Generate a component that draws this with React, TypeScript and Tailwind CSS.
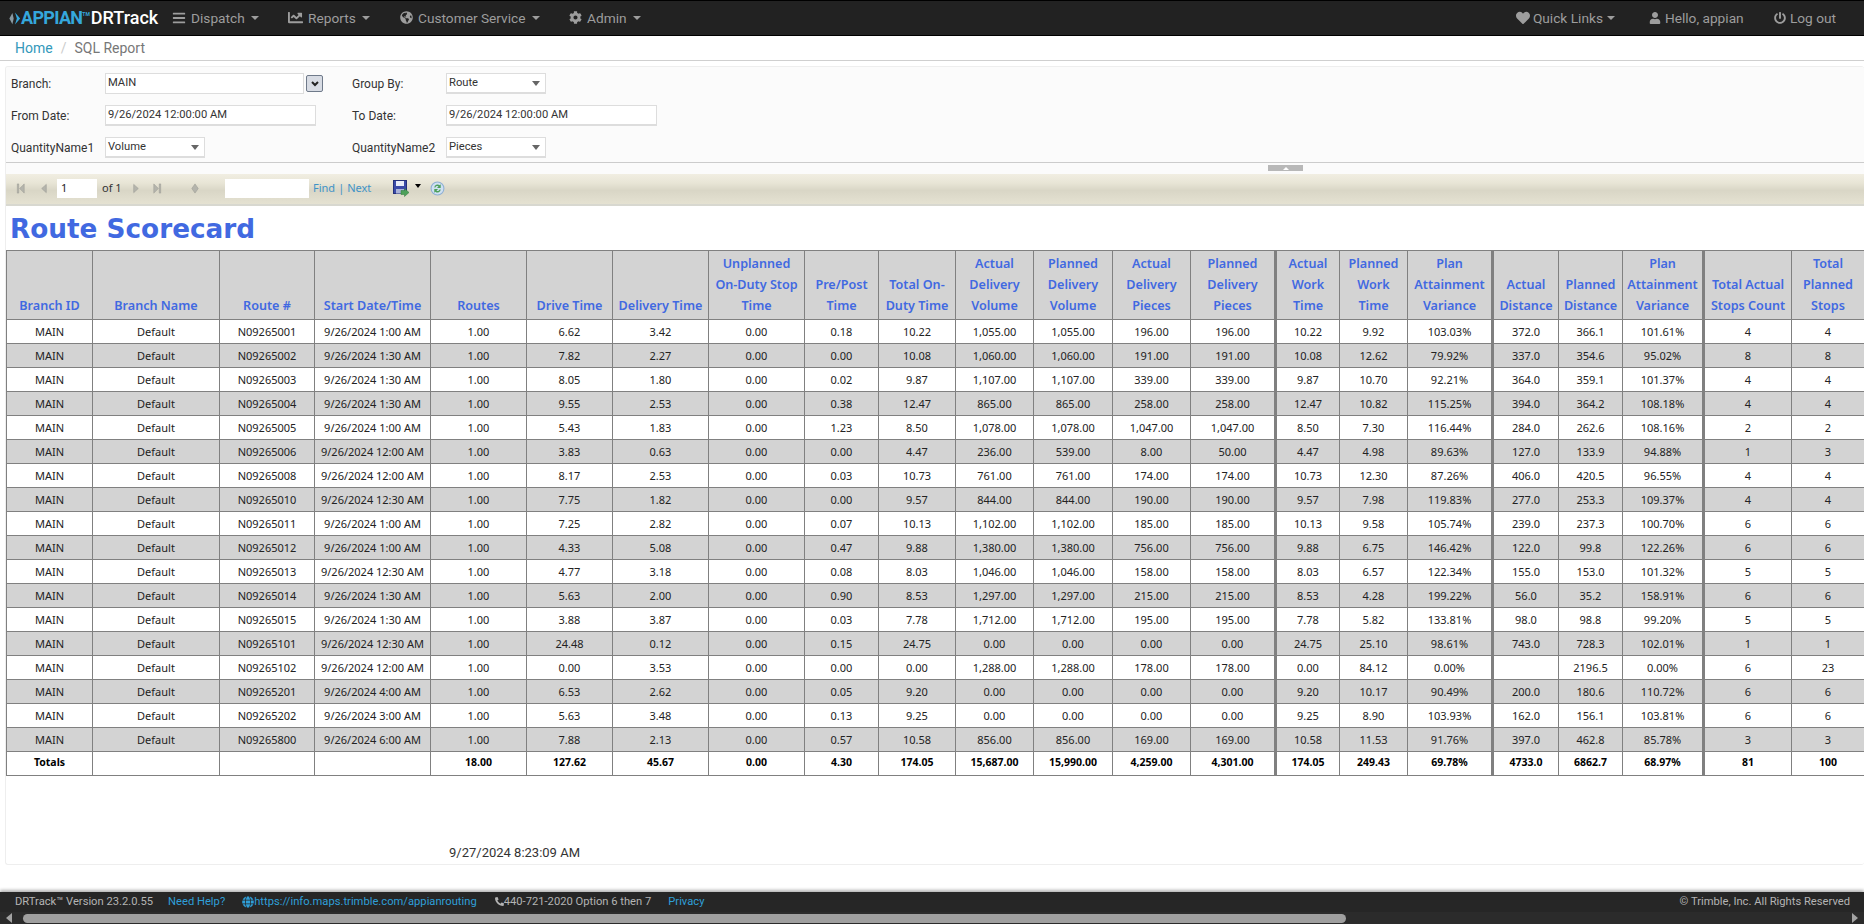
import { FaBars, FaChartLine, FaCog, FaGlobe, FaGlobeAmericas, FaHeart, FaPhoneAlt, FaPowerOff, FaUser } from "react-icons/fa";

const menuItems = [
  { label: "Dispatch", icon: <FaBars className="size-[14px]" />, className: "w-[116px]" },
  { label: "Reports", icon: <FaChartLine className="size-[15px]" />, className: "w-[112px]" },
  { label: "Customer Service", icon: <FaGlobeAmericas className="size-[13px]" />, className: "w-[169px]" },
  { label: "Admin", icon: <FaCog className="size-[13px]" />, className: "w-[90px]" },
];

const columns = [
  { title: "Branch ID", width: "w-[86px]" },
  { title: "Branch Name", width: "w-[127px]" },
  { title: "Route #", width: "w-[95px]" },
  { title: "Start Date/Time", width: "w-[116px]" },
  { title: "Routes", width: "w-[96px]" },
  { title: "Drive Time", width: "w-[86px]" },
  { title: "Delivery Time", width: "w-[96px]" },
  { title: "Unplanned\nOn-Duty Stop\nTime", width: "w-[96px]" },
  { title: "Pre/Post Time", width: "w-[74px]" },
  { title: "Total On-Duty Time", width: "w-[77px]" },
  { title: "Actual Delivery Volume", width: "w-[78px]" },
  { title: "Planned Delivery Volume", width: "w-[79px]" },
  { title: "Actual Delivery Pieces", width: "w-[78px]" },
  { title: "Planned Delivery Pieces", width: "w-[85px]" },
  { title: "Actual Work Time", width: "w-[64px]" },
  { title: "Planned Work Time", width: "w-[68px]" },
  { title: "Plan Attainment Variance", width: "w-[85px]" },
  { title: "Actual Distance", width: "w-[66px]" },
  { title: "Planned Distance", width: "w-[64px]" },
  { title: "Plan Attainment Variance", width: "w-[81px]" },
  { title: "Total Actual Stops Count", width: "w-[88px]" },
  { title: "Total Planned Stops", width: "w-[73px]" },
];

const rows = [
  ["N09265001", "1:00", "6.62", "3.42", "0.18", "10.22", "1,055.00", "1,055.00", "196.00", "196.00", "10.22", "9.92", "103.03%", "372.0", "366.1", "101.61%", "4", "4"],
  ["N09265002", "1:30", "7.82", "2.27", "0.00", "10.08", "1,060.00", "1,060.00", "191.00", "191.00", "10.08", "12.62", "79.92%", "337.0", "354.6", "95.02%", "8", "8"],
  ["N09265003", "1:30", "8.05", "1.80", "0.02", "9.87", "1,107.00", "1,107.00", "339.00", "339.00", "9.87", "10.70", "92.21%", "364.0", "359.1", "101.37%", "4", "4"],
  ["N09265004", "1:30", "9.55", "2.53", "0.38", "12.47", "865.00", "865.00", "258.00", "258.00", "12.47", "10.82", "115.25%", "394.0", "364.2", "108.18%", "4", "4"],
  ["N09265005", "1:00", "5.43", "1.83", "1.23", "8.50", "1,078.00", "1,078.00", "1,047.00", "1,047.00", "8.50", "7.30", "116.44%", "284.0", "262.6", "108.16%", "2", "2"],
  ["N09265006", "12:00", "3.83", "0.63", "0.00", "4.47", "236.00", "539.00", "8.00", "50.00", "4.47", "4.98", "89.63%", "127.0", "133.9", "94.88%", "1", "3"],
  ["N09265008", "12:00", "8.17", "2.53", "0.03", "10.73", "761.00", "761.00", "174.00", "174.00", "10.73", "12.30", "87.26%", "406.0", "420.5", "96.55%", "4", "4"],
  ["N09265010", "12:30", "7.75", "1.82", "0.00", "9.57", "844.00", "844.00", "190.00", "190.00", "9.57", "7.98", "119.83%", "277.0", "253.3", "109.37%", "4", "4"],
  ["N09265011", "1:00", "7.25", "2.82", "0.07", "10.13", "1,102.00", "1,102.00", "185.00", "185.00", "10.13", "9.58", "105.74%", "239.0", "237.3", "100.70%", "6", "6"],
  ["N09265012", "1:00", "4.33", "5.08", "0.47", "9.88", "1,380.00", "1,380.00", "756.00", "756.00", "9.88", "6.75", "146.42%", "122.0", "99.8", "122.26%", "6", "6"],
  ["N09265013", "12:30", "4.77", "3.18", "0.08", "8.03", "1,046.00", "1,046.00", "158.00", "158.00", "8.03", "6.57", "122.34%", "155.0", "153.0", "101.32%", "5", "5"],
  ["N09265014", "1:30", "5.63", "2.00", "0.90", "8.53", "1,297.00", "1,297.00", "215.00", "215.00", "8.53", "4.28", "199.22%", "56.0", "35.2", "158.91%", "6", "6"],
  ["N09265015", "1:30", "3.88", "3.87", "0.03", "7.78", "1,712.00", "1,712.00", "195.00", "195.00", "7.78", "5.82", "133.81%", "98.0", "98.8", "99.20%", "5", "5"],
  ["N09265101", "12:30", "24.48", "0.12", "0.15", "24.75", "0.00", "0.00", "0.00", "0.00", "24.75", "25.10", "98.61%", "743.0", "728.3", "102.01%", "1", "1"],
  ["N09265102", "12:00", "0.00", "3.53", "0.00", "0.00", "1,288.00", "1,288.00", "178.00", "178.00", "0.00", "84.12", "0.00%", "", "2196.5", "0.00%", "6", "23"],
  ["N09265201", "4:00", "6.53", "2.62", "0.05", "9.20", "0.00", "0.00", "0.00", "0.00", "9.20", "10.17", "90.49%", "200.0", "180.6", "110.72%", "6", "6"],
  ["N09265202", "3:00", "5.63", "3.48", "0.13", "9.25", "0.00", "0.00", "0.00", "0.00", "9.25", "8.90", "103.93%", "162.0", "156.1", "103.81%", "6", "6"],
  ["N09265800", "6:00", "7.88", "2.13", "0.57", "10.58", "856.00", "856.00", "169.00", "169.00", "10.58", "11.53", "91.76%", "397.0", "462.8", "85.78%", "3", "3"],
];

const totals = ["Totals", "", "", "", "18.00", "127.62", "45.67", "0.00", "4.30", "174.05", "15,687.00", "15,990.00", "4,259.00", "4,301.00", "174.05", "249.43", "69.78%", "4733.0", "6862.7", "68.97%", "81", "100"];

// columns that open a new group in the report get the heavy left rule
const thickAt = [14, 17, 20];

function rowCells(row: string[]) {
  const [route, time, drive, delivery, prePost, ...rest] = row;
  return ["MAIN", "Default", route, `9/26/2024 ${time} AM`, "1.00", drive, delivery, "0.00", prePost, ...rest];
}

function Caret() {
  return <span className="ml-[1px] inline-block border-x-[4px] border-t-[4px] border-x-transparent border-t-current" />;
}

function TopNav() {
  return (
    <nav className="flex h-9 shrink-0 items-center border-y border-black bg-[#222222] font-['Roboto',sans-serif] text-[13.7px] text-[#9d9d9d]">
      <div className="flex w-[172px] items-center pl-[9px] text-[18px] font-bold leading-none">
        <svg viewBox="0 0 12 16" className="h-[15px] w-[12px]">
          <path d="M3.200 2 0 8l3.200 6L4.600 8z" fill="#8a9aa3" />
          <path d="M6 1.500 11.500 8 6 14.500 8 8z" fill="#35a7dc" />
        </svg>
        <span className="tracking-[-0.7px] text-[#35a7dc]">APPIAN</span>
        <span className="mb-[8px] text-[5px] text-[#35a7dc]">TM</span>
        <span className="ml-[1px] font-medium text-white">DRTrack</span>
      </div>
      {menuItems.map((item) => (
        <div key={item.label} className={`flex items-center gap-[5px] ${item.className}`}>
          {item.icon}
          <span>{item.label}</span>
          <Caret />
        </div>
      ))}
      <div className="ml-auto flex items-center pr-[28px]">
        <div className="flex w-[133px] items-center gap-[3px]">
          <FaHeart className="size-[14px]" />
          <span>Quick Links</span>
          <Caret />
        </div>
        <div className="flex w-[125px] items-center gap-[4px]">
          <FaUser className="size-[12px]" />
          <span>Hello, appian</span>
        </div>
        <div className="flex items-center gap-[4px]">
          <FaPowerOff className="size-[12px]" />
          <span>Log out</span>
        </div>
      </div>
    </nav>
  );
}

function Breadcrumb() {
  return (
    <div className="flex h-[25px] shrink-0 items-center border-b border-[#cfcfcf] bg-white pl-[15px] font-['Roboto',sans-serif] text-[14px]">
      <span className="text-[#3399bb]">Home</span>
      <span className="px-[8px] text-[#cccccc]">/</span>
      <span className="text-[#777777]">SQL Report</span>
    </div>
  );
}

function TextField({ value, width }: { value: string; width: string }) {
  return (
    <div className={`flex h-[21px] items-center border border-b-2 border-[#dddddd] bg-white pl-[2px] text-[11.2px] ${width}`}>
      {value}
    </div>
  );
}

function SelectField({ value, width }: { value: string; width: string }) {
  return (
    <div className={`flex h-[21px] items-center justify-between border border-b-2 border-[#dddddd] bg-white pl-[2px] pr-[3px] text-[11.2px] ${width}`}>
      <span>{value}</span>
      <span className="mr-[2px] border-x-[4px] border-t-[5px] border-x-transparent border-t-[#666666]" />
    </div>
  );
}

function FilterPanel() {
  return (
    <div className="grid h-[96px] shrink-0 grid-cols-[94px_247px_94px_1fr] grid-rows-[21px_21px_21px] content-start items-center gap-y-[11px] border-b border-[#cccccc] bg-[#fbfbfb] pl-[5px] pt-[6px] font-['Roboto',sans-serif] text-[12px] text-[#333333]">
      <span>Branch:</span>
      <div className="flex items-center gap-[2px]">
        <div className="flex h-[21px] w-[199px] items-center border border-b-dotted border-[#dddddd] bg-white pl-[2px] text-[11.2px]">MAIN</div>
        <div className="flex h-[17px] w-[17px] items-center justify-center rounded-[2px] border border-[#6f7a8a] bg-[#d8dce4]">
          <svg viewBox="0 0 8 6" className="w-[8px]">
            <path d="M1 1l3 3 3-3" fill="none" stroke="#222222" strokeWidth="2" />
          </svg>
        </div>
      </div>
      <span>Group By:</span>
      <SelectField value="Route" width="w-[100px]" />
      <span>From Date:</span>
      <TextField value="9/26/2024 12:00:00 AM" width="w-[211px]" />
      <span>To Date:</span>
      <TextField value="9/26/2024 12:00:00 AM" width="w-[211px]" />
      <span>QuantityName1</span>
      <SelectField value="Volume" width="w-[100px]" />
      <span>QuantityName2</span>
      <SelectField value="Pieces" width="w-[100px]" />
    </div>
  );
}

function PagerArrow({ path }: { path: string }) {
  return (
    <svg viewBox="0 0 10 12" className="h-[11px] w-[10px]">
      <path d={path} fill="#b4b4ac" stroke="#9c9c94" strokeWidth="0.6" />
    </svg>
  );
}

function ReportToolbar() {
  return (
    <div className="flex h-[32px] shrink-0 items-center border-b-2 border-[#d8d8d0] bg-[linear-gradient(180deg,#f1eee2_0%,#e8e5d6_30%,#d9d6c6_55%,#e5e2d2_100%)] pb-[2px] pl-[10px] font-['Noto_Sans',sans-serif] text-[11px] text-[#333333]">
      <PagerArrow path="M1 1h1.500v10H1zM8.500 1v10L3.500 6z" />
      <div className="w-[13px]" />
      <PagerArrow path="M7.500 1.500v9L2.500 6z" />
      <div className="ml-[8px] flex h-[19px] w-[40px] items-center bg-white pl-[4px] text-[#222222]">1</div>
      <span className="ml-[5px] w-[29px]">of 1</span>
      <PagerArrow path="M2.500 1.500v9L7.500 6z" />
      <div className="w-[11px]" />
      <PagerArrow path="M1.500 1v10L6.500 6zM7.500 1H9v10H7.500z" />
      <div className="w-[28px]" />
      <PagerArrow path="M5 1 1.500 6 5 11l3.500-5z" />
      <div className="ml-[25px] h-[19px] w-[84px] bg-white" />
      <span className="ml-[4px] text-[#3f93c7]">Find</span>
      <span className="mx-[3px] text-[#3f93c7]">|</span>
      <span className="text-[#3f93c7]">Next</span>
      <svg viewBox="0 0 17 17" className="ml-[22px] h-[17px] w-[17px]">
        <rect x="0.500" y="0.500" width="13" height="13" fill="#3a4aa8" stroke="#24307a" />
        <rect x="3" y="1" width="8" height="5" fill="#e8ecf8" />
        <rect x="3" y="9" width="8" height="4.500" fill="#a9b2d8" />
        <path d="M8 10.500h3.500V8.500L16 12.500l-4.500 4v-2H8z" fill="#4da05a" stroke="#2d7a3a" strokeWidth="0.5" />
      </svg>
      <span className="mb-[4px] ml-[5px] border-x-[3px] border-t-[4px] border-x-transparent border-t-black" />
      <svg viewBox="0 0 14 14" className="ml-[9px] h-[15px] w-[15px]">
        <circle cx="7" cy="7" r="6" fill="#cfe0f2" stroke="#8fb0d4" />
        <path d="M4 6a3 3 0 0 1 5-2l1-1v3.500H6.500L8 5a2 2 0 0 0-3 1z" fill="#4da05a" />
        <path d="M10 8a3 3 0 0 1-5 2l-1 1V7.500h3.500L6 9a2 2 0 0 0 3-1z" fill="#4da05a" />
      </svg>
    </div>
  );
}

function ReportTable() {
  return (
    <table className="w-[1859px] table-fixed border-collapse border border-[#808080] font-['Noto_Sans',sans-serif] text-[11px] text-[#222222]">
      <thead>
        <tr className="h-[69px] bg-[#d3d3d3]">
          {columns.map((column, index) => (
            <th
              key={`${column.title}-${index}`}
              className={`whitespace-pre-line border border-[#808080] px-[2px] pb-[3px] text-center align-bottom text-[12.6px] font-semibold leading-[21px] text-[#4169e1] ${column.width} ${thickAt.includes(index) ? "border-l-[3px]" : ""}`}
            >
              {column.title}
            </th>
          ))}
        </tr>
      </thead>
      <tbody>
        {rows.map((row, rowIndex) => (
          <tr key={row[0]} className={`h-[24px] ${rowIndex % 2 === 0 ? "bg-white" : "bg-[#d3d3d3]"}`}>
            {rowCells(row).map((cell, index) => (
              <td key={index} className={`border border-[#808080] p-0 pb-[1px] text-center leading-none ${thickAt.includes(index) ? "border-l-[3px]" : ""}`}>
                {cell}
              </td>
            ))}
          </tr>
        ))}
        <tr className="h-[24px] bg-white font-bold text-black">
          {totals.map((cell, index) => (
            <td key={index} className={`border border-[#808080] p-0 pb-[2px] text-center text-[10.5px] leading-none ${thickAt.includes(index) ? "border-l-[3px]" : ""}`}>
              {cell}
            </td>
          ))}
        </tr>
      </tbody>
    </table>
  );
}

function FooterBar() {
  return (
    <footer className="flex h-[20px] shrink-0 items-center justify-between bg-[#262626] pl-[15px] pr-[14px] font-['Roboto',sans-serif] text-[11.2px] text-[#b4b4b4] shadow-[0_-2px_3px_rgba(0,0,0,0.3)]">
      <div className="flex items-center">
        <span>DRTrack™ Version 23.2.0.55</span>
        <span className="ml-[15px] text-[#2f9fd8]">Need Help?</span>
        <FaGlobe className="ml-[17px] size-[12px] text-[#2f9fd8]" />
        <span className="text-[#2f9fd8]">https://info.maps.trimble.com/appianrouting</span>
        <FaPhoneAlt className="ml-[18px] size-[9px]" />
        <span>440-721-2020 Option 6 then 7</span>
        <span className="ml-[17px] text-[#2f9fd8]">Privacy</span>
      </div>
      <span>© Trimble, Inc. All Rights Reserved</span>
    </footer>
  );
}

function PageScrollbar() {
  return (
    <div className="flex h-[12px] shrink-0 items-center bg-[#2b2b2b] px-[6px]">
      <span className="border-y-[5px] border-r-[6px] border-y-transparent border-r-[#a3a3a3]" />
      <div className="ml-[11px] h-[9px] w-[1323px] rounded-full bg-[#9f9f9f]" />
      <span className="ml-auto border-y-[5px] border-l-[6px] border-y-transparent border-l-[#a3a3a3]" />
    </div>
  );
}

export default function App() {
  return (
    <main className="flex h-screen w-full flex-col overflow-hidden bg-white">
      <TopNav />
      <Breadcrumb />
      <div className="ml-[5px] mt-[5px] flex h-[799px] shrink-0 flex-col overflow-hidden rounded-[3px] border-y border-l border-[#eeeeee]">
        <FilterPanel />
        <div className="flex h-[11px] shrink-0 justify-end bg-[#fbfbfb] pr-[561px] pt-[2px]">
          <div className="flex h-[6px] w-[35px] items-center justify-center bg-[#b8b8b8]">
            <span className="border-x-[3px] border-b-[3px] border-x-transparent border-b-white" />
          </div>
        </div>
        <ReportToolbar />
        <h1 className="flex h-[44px] shrink-0 items-center pl-[4px] pt-[3px] font-['DejaVu_Sans',sans-serif] text-[26.3px] font-bold text-[#4169e1]">
          Route Scorecard
        </h1>
        <ReportTable />
        <div className="ml-[443px] mt-[67px] font-['Roboto',sans-serif] text-[13px] leading-5 text-[#333333]">9/27/2024 8:23:09 AM</div>
      </div>
      <div className="flex-1" />
      <FooterBar />
      <PageScrollbar />
    </main>
  );
}
